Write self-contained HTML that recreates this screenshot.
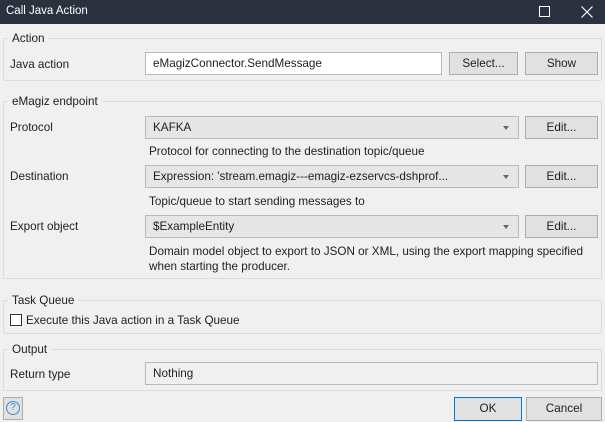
<!DOCTYPE html>
<html><head><style>
*{box-sizing:border-box;margin:0;padding:0}
body{width:605px;height:422px;background:#f0f0f0;font-family:"Liberation Sans",sans-serif;font-size:11.7px;color:#1e1e1e;position:relative;overflow:hidden}
.a{position:absolute;white-space:nowrap}
.title{left:0;top:0;width:605px;height:24px;background:#2c3140;color:#fff}
.grp{border:1px solid #dcdcdc;border-radius:2px}
.lg{background:#f0f0f0;padding:0 4px}
.tb{background:#fff;border:1px solid #b9b9b9;padding-left:7px;line-height:21px}
.cb{background:#e6e6e6;border:1px solid #b9b9b9;padding-left:7px;line-height:21px}
.btn{background:#e1e1e1;border:1px solid #adadad;text-align:center;line-height:21px}
.arr{position:absolute;right:9px;top:9px;width:0;height:0;border-left:3px solid transparent;border-right:3px solid transparent;border-top:4px solid #666}
</style></head><body>
<div class="a title"><span class="a" style="left:6px;top:5px;font-size:11.5px">Call Java Action</span>
<div class="a" style="left:539px;top:6px;width:11px;height:11px;border:1px solid #fff"></div>
<svg class="a" style="left:581px;top:6px" width="12" height="12"><path d="M0.5 0.5L11.5 11.5M11.5 0.5L0.5 11.5" stroke="#fff" stroke-width="1.2"/></svg></div>

<div class="a grp" style="left:3px;top:38px;width:599px;height:43px"></div>
<span class="a lg" style="left:8px;top:32px">Action</span>
<span class="a" style="left:10px;top:58px">Java action</span>
<div class="a tb" style="left:145px;top:52px;width:297px;height:23px">eMagizConnector.SendMessage</div>
<div class="a btn" style="left:449px;top:52px;width:69px;height:23px">Select...</div>
<div class="a btn" style="left:525px;top:52px;width:73px;height:23px">Show</div>

<div class="a grp" style="left:3px;top:101px;width:599px;height:178px"></div>
<span class="a lg" style="left:8px;top:95px">eMagiz endpoint</span>
<span class="a" style="left:10px;top:121px">Protocol</span>
<div class="a cb" style="left:145px;top:116px;width:374px;height:23px">KAFKA<i class="arr"></i></div>
<div class="a btn" style="left:525px;top:116px;width:73px;height:23px">Edit...</div>
<span class="a" style="left:149px;top:145px">Protocol for connecting to the destination topic/queue</span>
<span class="a" style="left:10px;top:170px">Destination</span>
<div class="a cb" style="left:145px;top:165px;width:374px;height:23px">Expression: 'stream.emagiz---emagiz-ezservcs-dshprof...<i class="arr"></i></div>
<div class="a btn" style="left:525px;top:165px;width:73px;height:23px">Edit...</div>
<span class="a" style="left:149px;top:195px">Topic/queue to start sending messages to</span>
<span class="a" style="left:10px;top:220px">Export object</span>
<div class="a cb" style="left:145px;top:215px;width:374px;height:23px">$ExampleEntity<i class="arr"></i></div>
<div class="a btn" style="left:525px;top:215px;width:73px;height:23px">Edit...</div>
<span class="a" style="left:149px;top:245px">Domain model object to export to JSON or XML, using the export mapping specified</span>
<span class="a" style="left:149px;top:260px">when starting the producer.</span>

<div class="a grp" style="left:3px;top:300px;width:599px;height:34px"></div>
<span class="a lg" style="left:8px;top:294px">Task Queue</span>
<div class="a" style="left:10px;top:314px;width:12px;height:12px;background:#fff;border:1px solid #333"></div>
<span class="a" style="left:26px;top:314px">Execute this Java action in a Task Queue</span>

<div class="a grp" style="left:3px;top:349px;width:599px;height:42px"></div>
<span class="a lg" style="left:8px;top:343px">Output</span>
<span class="a" style="left:10px;top:368px">Return type</span>
<div class="a cb" style="left:145px;top:362px;width:453px;height:23px;background:#f0f0f0">Nothing</div>

<div class="a" style="left:3px;top:397px;width:20px;height:23px;background:#e1e1e1;border:1px solid #adadad"></div>
<div class="a" style="left:6px;top:401px;width:14px;height:14px;border:1px solid #3d8fd6;border-radius:50%;color:#3d8fd6;font-size:10px;text-align:center;line-height:12px">?</div>
<div class="a btn" style="left:454px;top:397px;width:68px;height:24px;border-color:#0078d7">OK</div>
<div class="a btn" style="left:526px;top:397px;width:76px;height:24px">Cancel</div>
</body></html>
